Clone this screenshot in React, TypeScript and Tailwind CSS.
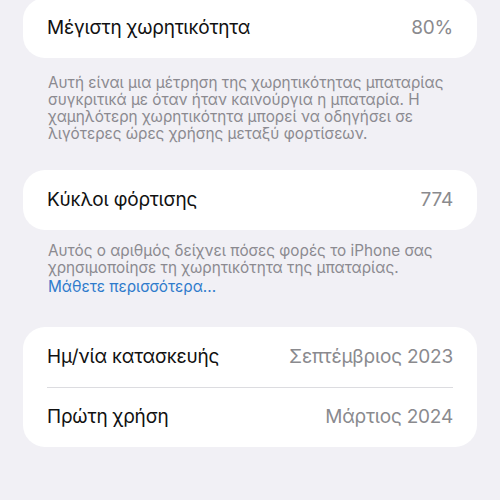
const font = { fontFamily: "Inter, 'Noto Sans', sans-serif" };

type Row = { label: string; value: string };

function Card({ rows, className }: { rows: Row[]; className?: string }) {
  return (
    <div className={`rounded-[22px] bg-white px-[24px] ${className ?? ""}`}>
      {rows.map((row, i) => (
        <div
          key={row.label}
          className={`flex h-[60px] items-center justify-between ${
            i > 0 ? "border-t border-[#dcdce0]" : ""
          }`}
        >
          <span className="text-[19px] tracking-[-0.2px] text-[#111111]">{row.label}</span>
          <span className="text-[19px] tracking-[-0.2px] text-[#8a8a8e]">{row.value}</span>
        </div>
      ))}
    </div>
  );
}

export default function App() {
  return (
    <div
      style={font}
      className="h-[500px] w-[500px] overflow-hidden bg-[#f1f0f5] px-[23px]"
    >
      <Card className="-mt-[2px]" rows={[{ label: "Μέγιστη χωρητικότητα", value: "80%" }]} />
      <p className="mt-[16px] px-[25px] text-[15.3px] leading-[17px] text-[#8b8a90]">
        Αυτή είναι μια μέτρηση της χωρητικότητας μπαταρίας συγκριτικά με όταν ήταν καινούργια η
        μπαταρία. Η χαμηλότερη χωρητικότητα μπορεί να οδηγήσει σε λιγότερες ώρες χρήσης μεταξύ
        φορτίσεων.
      </p>

      <Card className="mt-[28px]" rows={[{ label: "Κύκλοι φόρτισης", value: "774" }]} />
      <div className="mt-[12px] px-[25px] text-[15.3px] leading-[17px]">
        <p className="text-[#8b8a90]">
          Αυτός ο αριθμός δείχνει πόσες φορές το iPhone σας χρησιμοποίησε τη χωρητικότητα της
          μπαταρίας.
        </p>
        <p className="mt-[2px] text-[#2f7bcc]">Μάθετε περισσότερα...</p>
      </div>

      <Card
        className="mt-[32px]"
        rows={[
          { label: "Ημ/νία κατασκευής", value: "Σεπτέμβριος 2023" },
          { label: "Πρώτη χρήση", value: "Μάρτιος 2024" },
        ]}
      />
    </div>
  );
}
